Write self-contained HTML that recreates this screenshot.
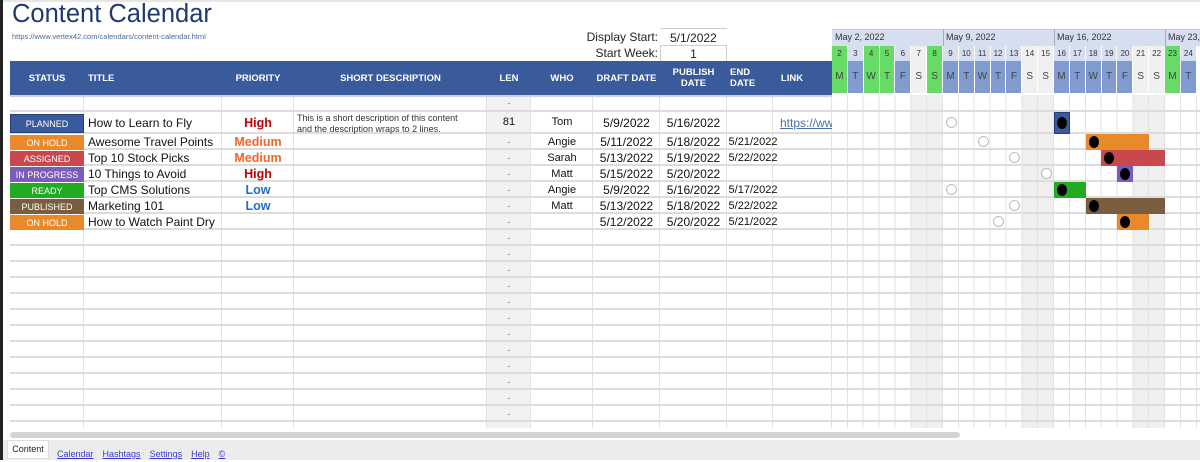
<!DOCTYPE html>
<html><head><meta charset="utf-8"><style>
*{margin:0;padding:0;box-sizing:border-box}
body{width:1200px;height:460px;position:relative;overflow:hidden;background:#fff;font-family:"Liberation Sans",Arial,sans-serif;color:#222}
.a{position:absolute}
.hd{position:absolute;top:61px;height:34px;color:#fff;font-weight:bold;font-size:9.5px;display:flex;align-items:center;justify-content:center;text-align:center;line-height:11px}
.st{position:absolute;left:10px;width:74px;color:#fff;font-size:9px;display:flex;align-items:center;justify-content:center;height:15px}
.t{position:absolute;left:88px;font-size:12px;color:#111}
.p{position:absolute;left:222px;width:72px;text-align:center;font-weight:bold;font-size:12.5px}
.c{position:absolute;text-align:center;font-size:12px;color:#111}
.dash{position:absolute;left:487px;width:44px;text-align:center;font-size:9px;color:#777}
.row{position:absolute;left:832px;display:flex}
.row div{width:15.86px;flex:none;text-align:center;border-right:1px solid #fff}
.bar{position:absolute;height:16px}
.dot{position:absolute;width:10px;height:12px;border-radius:50%;background:#000}
.ho{position:absolute;width:11px;height:11px;border-radius:50%;border:1px solid #bbb;background:#fff}
.tab{font-size:9px;color:#3b3bd0;text-decoration:underline;margin-right:9px}
.m{position:absolute;top:32px;font-size:9px;color:#333;white-space:nowrap}
</style></head><body>
<div class="a" style="left:0;top:0;width:3px;height:460px;background:#222"></div>
<div class="a" style="left:3px;top:0;width:1197px;height:2px;background:#e6e6e6"></div>
<div class="a" style="left:12px;top:0px;font-size:25.5px;color:#1f3a6e">Content Calendar</div>
<div class="a" style="left:12px;top:32px;font-size:7.5px;color:#4a6a9a">https://www.vertex42.com/calendars/content-calendar.html</div>
<div class="a" style="left:560px;top:30px;width:98px;text-align:right;font-size:12px">Display Start:</div>
<div class="a" style="left:660px;top:28px;width:67px;height:17px;border-top:1px solid #ccc;font-size:12px;padding:2px 0 0 10px">5/1/2022</div>
<div class="a" style="left:560px;top:46px;width:98px;text-align:right;font-size:12px">Start Week:</div>
<div class="a" style="left:660px;top:45px;width:67px;height:17px;border:1px solid #ccc;font-size:12px;text-align:center;padding-top:1px">1</div>

<div class="a" style="left:487px;top:95px;width:44px;height:333px;background:#f2f2f2"></div>
<div class="a" style="left:911px;top:95px;width:32px;height:333px;background:#efefef"></div>
<div class="a" style="left:1022px;top:95px;width:32px;height:333px;background:#efefef"></div>
<div class="a" style="left:1133px;top:95px;width:32px;height:333px;background:#efefef"></div>
<div class="a" style="left:10px;top:95px;width:1190px;height:333px;background-image:
linear-gradient(90deg,transparent 73px,#e2e2e2 73px,#e2e2e2 74px,transparent 74px,transparent 211px,#e2e2e2 211px,#e2e2e2 212px,transparent 212px,transparent 283px,#e2e2e2 283px,#e2e2e2 284px,transparent 284px,transparent 476px,#e2e2e2 476px,#e2e2e2 477px,transparent 477px,transparent 520px,#e2e2e2 520px,#e2e2e2 521px,transparent 521px,transparent 582px,#e2e2e2 582px,#e2e2e2 583px,transparent 583px,transparent 649px,#e2e2e2 649px,#e2e2e2 650px,transparent 650px,transparent 716px,#e2e2e2 716px,#e2e2e2 717px,transparent 717px,transparent 762px,#e2e2e2 762px,#e2e2e2 763px,transparent 763px,transparent 821px,#e2e2e2 821px,#e2e2e2 822px,transparent 822px)"></div>
<div class="a" style="left:832px;top:95px;width:368px;height:333px;background:repeating-linear-gradient(90deg,transparent 0,transparent 14.86px,#e2e2e2 14.86px,#e2e2e2 15.86px)"></div>
<div class="a" style="left:10px;top:110px;width:1190px;height:2px;background:#dcdcdc"></div>
<div class="a" style="left:10px;top:132px;width:1190px;height:296px;background:repeating-linear-gradient(180deg,#dcdcdc 0,#dcdcdc 2px,transparent 2px,transparent 16px)"></div>

<div class="a" style="left:10px;top:61px;width:822px;height:34px;background:#3a5b9b"></div>
<div class="a" style="left:10px;top:95px;width:822px;height:2px;background:#c9d3e6"></div>
<div class="hd" style="left:10px;width:74px">STATUS</div>
<div class="hd" style="left:88px;width:60px;justify-content:flex-start">TITLE</div>
<div class="hd" style="left:222px;width:72px">PRIORITY</div>
<div class="hd" style="left:294px;width:193px">SHORT DESCRIPTION</div>
<div class="hd" style="left:487px;width:44px">LEN</div>
<div class="hd" style="left:531px;width:62px">WHO</div>
<div class="hd" style="left:593px;width:67px">DRAFT DATE</div>
<div class="hd" style="left:660px;width:67px">PUBLISH<br>DATE</div>
<div class="hd" style="left:727px;width:46px;justify-content:flex-start;padding-left:3px;text-align:left">END<br>DATE</div>
<div class="hd" style="left:773px;width:38px">LINK</div>

<div class="a" style="left:832px;top:29px;width:368px;height:17px;background:#d6dff0;border-top:1px solid #c3cde0"></div>
<div class="a" style="left:943px;top:29px;width:1px;height:17px;background:#aab"></div>
<div class="a" style="left:1054px;top:29px;width:1px;height:17px;background:#aab"></div>
<div class="a" style="left:1165px;top:29px;width:1px;height:17px;background:#aab"></div>
<div class="m" style="left:835px">May 2, 2022</div>
<div class="m" style="left:946px">May 9, 2022</div>
<div class="m" style="left:1057px">May 16, 2022</div>
<div class="m" style="left:1168px">May 23, 2022</div>
<div class="row" style="top:46px;height:15px;font-size:8px;line-height:15px;color:#333">
<div style="background:#66db66">2</div><div style="background:#d6dff0">3</div><div style="background:#66db66">4</div><div style="background:#66db66">5</div><div style="background:#d6dff0">6</div><div style="background:#f0f0f0">7</div><div style="background:#66db66">8</div><div style="background:#d6dff0">9</div><div style="background:#d6dff0">10</div><div style="background:#d6dff0">11</div><div style="background:#d6dff0">12</div><div style="background:#d6dff0">13</div><div style="background:#f0f0f0">14</div><div style="background:#f0f0f0">15</div><div style="background:#d6dff0">16</div><div style="background:#d6dff0">17</div><div style="background:#d6dff0">18</div><div style="background:#d6dff0">19</div><div style="background:#d6dff0">20</div><div style="background:#f0f0f0">21</div><div style="background:#f0f0f0">22</div><div style="background:#66db66">23</div><div style="background:#d6dff0">24</div></div>
<div class="row" style="top:61px;height:32px;font-size:10px;line-height:32px;color:#444">
<div style="background:#66db66">M</div><div style="background:#7f9bcf">T</div><div style="background:#66db66">W</div><div style="background:#66db66">T</div><div style="background:#7f9bcf">F</div><div style="background:#f0f0f0">S</div><div style="background:#66db66">S</div><div style="background:#7f9bcf">M</div><div style="background:#7f9bcf">T</div><div style="background:#7f9bcf">W</div><div style="background:#7f9bcf">T</div><div style="background:#7f9bcf">F</div><div style="background:#f0f0f0">S</div><div style="background:#f0f0f0">S</div><div style="background:#7f9bcf">M</div><div style="background:#7f9bcf">T</div><div style="background:#7f9bcf">W</div><div style="background:#7f9bcf">T</div><div style="background:#7f9bcf">F</div><div style="background:#f0f0f0">S</div><div style="background:#f0f0f0">S</div><div style="background:#66db66">M</div><div style="background:#7f9bcf">T</div></div>

<div class="st" style="top:114px;height:19px;background:#3a5b9b;border:1px solid #23407a">PLANNED</div>
<div class="st" style="top:135px;background:#e8892a">ON HOLD</div>
<div class="st" style="top:151px;background:#c9484e">ASSIGNED</div>
<div class="st" style="top:167px;background:#7b5cb8">IN PROGRESS</div>
<div class="st" style="top:183px;background:#22aa22">READY</div>
<div class="st" style="top:199px;background:#7a5c3f">PUBLISHED</div>
<div class="st" style="top:215px;background:#e8892a">ON HOLD</div>

<div class="t" style="top:116px">How to Learn to Fly</div>
<div class="t" style="top:135px">Awesome Travel Points</div>
<div class="t" style="top:151px">Top 10 Stock Picks</div>
<div class="t" style="top:167px">10 Things to Avoid</div>
<div class="t" style="top:183px">Top CMS Solutions</div>
<div class="t" style="top:199px">Marketing 101</div>
<div class="t" style="top:215px">How to Watch Paint Dry</div>

<div class="p" style="top:116px;color:#c00000">High</div>
<div class="p" style="top:135px;color:#f26522">Medium</div>
<div class="p" style="top:151px;color:#f26522">Medium</div>
<div class="p" style="top:167px;color:#c00000">High</div>
<div class="p" style="top:183px;color:#1f6fc5">Low</div>
<div class="p" style="top:199px;color:#1f6fc5">Low</div>

<div class="a" style="left:297px;top:113px;font-size:9px;line-height:10.5px;color:#333">This is a short description of this content<br>and the description wraps to 2 lines.</div>

<div class="c" style="left:487px;width:44px;top:116px;font-size:11px">81</div>
<div class="c" style="left:531px;width:62px;top:116px;font-size:11px">Tom</div>
<div class="c" style="left:531px;width:62px;top:136px;font-size:11px">Angie</div>
<div class="c" style="left:531px;width:62px;top:152px;font-size:11px">Sarah</div>
<div class="c" style="left:531px;width:62px;top:168px;font-size:11px">Matt</div>
<div class="c" style="left:531px;width:62px;top:184px;font-size:11px">Angie</div>
<div class="c" style="left:531px;width:62px;top:200px;font-size:11px">Matt</div>

<div class="c" style="left:593px;width:67px;top:116px">5/9/2022</div>
<div class="c" style="left:593px;width:67px;top:135px">5/11/2022</div>
<div class="c" style="left:593px;width:67px;top:151px">5/13/2022</div>
<div class="c" style="left:593px;width:67px;top:167px">5/15/2022</div>
<div class="c" style="left:593px;width:67px;top:183px">5/9/2022</div>
<div class="c" style="left:593px;width:67px;top:199px">5/13/2022</div>
<div class="c" style="left:593px;width:67px;top:215px">5/12/2022</div>
<div class="c" style="left:660px;width:67px;top:116px">5/16/2022</div>
<div class="c" style="left:660px;width:67px;top:135px">5/18/2022</div>
<div class="c" style="left:660px;width:67px;top:151px">5/19/2022</div>
<div class="c" style="left:660px;width:67px;top:167px">5/20/2022</div>
<div class="c" style="left:660px;width:67px;top:183px">5/16/2022</div>
<div class="c" style="left:660px;width:67px;top:199px">5/18/2022</div>
<div class="c" style="left:660px;width:67px;top:215px">5/20/2022</div>
<div class="c" style="left:727px;width:52px;top:136px;font-size:11px">5/21/2022</div>
<div class="c" style="left:727px;width:52px;top:152px;font-size:11px">5/22/2022</div>
<div class="c" style="left:727px;width:52px;top:184px;font-size:11px">5/17/2022</div>
<div class="c" style="left:727px;width:52px;top:200px;font-size:11px">5/22/2022</div>
<div class="c" style="left:727px;width:52px;top:216px;font-size:11px">5/21/2022</div>
<div class="a" style="left:780px;top:116px;width:52px;overflow:hidden;white-space:nowrap;font-size:12px;color:#4a6fa5;text-decoration:underline">https://www</div>

<div class="dash" style="top:98px">-</div>
<div class="dash" style="top:137px">-</div><div class="dash" style="top:153px">-</div><div class="dash" style="top:169px">-</div><div class="dash" style="top:185px">-</div><div class="dash" style="top:201px">-</div><div class="dash" style="top:217px">-</div><div class="dash" style="top:233px">-</div><div class="dash" style="top:249px">-</div><div class="dash" style="top:265px">-</div><div class="dash" style="top:281px">-</div><div class="dash" style="top:297px">-</div><div class="dash" style="top:313px">-</div><div class="dash" style="top:329px">-</div><div class="dash" style="top:345px">-</div><div class="dash" style="top:361px">-</div><div class="dash" style="top:377px">-</div><div class="dash" style="top:393px">-</div><div class="dash" style="top:409px">-</div>

<div class="bar" style="left:1054px;top:112px;width:16px;height:22px;background:#3a5b9b;border:1px solid #23407a"></div>
<div class="dot" style="left:1057px;top:117px"></div>
<div class="bar" style="left:1086px;top:134px;width:63px;background:#e8892a"></div><div class="dot" style="left:1089px;top:136px"></div>
<div class="bar" style="left:1101px;top:150px;width:64px;background:#c9484e"></div><div class="dot" style="left:1104px;top:152px"></div>
<div class="bar" style="left:1117px;top:166px;width:16px;background:#7b5cb8"></div><div class="dot" style="left:1120px;top:168px"></div>
<div class="bar" style="left:1054px;top:182px;width:32px;background:#22aa22"></div><div class="dot" style="left:1057px;top:184px"></div>
<div class="bar" style="left:1086px;top:198px;width:79px;background:#7a5c3f"></div><div class="dot" style="left:1089px;top:200px"></div>
<div class="bar" style="left:1117px;top:214px;width:32px;background:#e8892a"></div><div class="dot" style="left:1120px;top:216px"></div>
<div class="ho" style="left:946px;top:117px"></div>
<div class="ho" style="left:978px;top:136px"></div>
<div class="ho" style="left:1009px;top:152px"></div>
<div class="ho" style="left:1041px;top:168px"></div>
<div class="ho" style="left:946px;top:184px"></div>
<div class="ho" style="left:1009px;top:200px"></div>
<div class="ho" style="left:993px;top:216px"></div>

<div class="a" style="left:3px;top:428px;width:1197px;height:12px;background:#fff"></div>
<div class="a" style="left:10px;top:432px;width:950px;height:6px;border-radius:3px;background:#d4d4d4"></div>
<div class="a" style="left:3px;top:440px;width:1197px;height:20px;background:#ececec"></div>
<div class="a" style="left:7px;top:440px;width:42px;height:19px;background:#fff;border:1px solid #ddd;font-size:9px;color:#222;text-align:center;line-height:17px">Content</div>
<div class="a" style="left:57px;top:444px;white-space:nowrap"><span class="tab">Calendar</span><span class="tab">Hashtags</span><span class="tab">Settings</span><span class="tab">Help</span><span class="tab">©</span></div>
</body></html>
